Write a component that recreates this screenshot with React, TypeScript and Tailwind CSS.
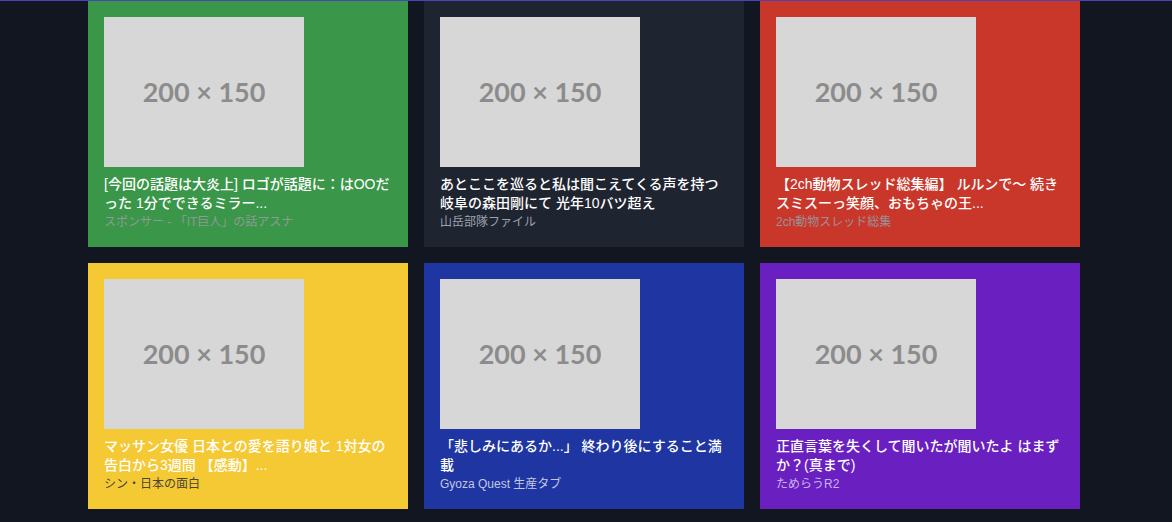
const cards = [
  {
    bg: 'bg-[#3a9648]',
    title: '[今回の話題は大炎上] ロゴが話題に：はOOだった 1分でできるミラー...',
    sub: 'スポンサー - 「IT巨人」の話アスナ',
    subColor: 'text-[#8f9a94]',
  },
  {
    bg: 'bg-[#1f2431]',
    title: 'あとここを巡ると私は聞こえてくる声を持つ岐阜の森田剛にて 光年10バツ超え',
    sub: '山岳部隊ファイル',
    subColor: 'text-[#9ca3af]',
  },
  {
    bg: 'bg-[#c9372b]',
    title: '【2ch動物スレッド総集編】 ルルンで〜 続きスミスーっ笑顔、おもちゃの王...',
    sub: '2ch動物スレッド総集',
    subColor: 'text-[#9a9198]',
  },
  {
    bg: 'bg-[#f4c934]',
    title: 'マッサン女優 日本との愛を語り娘と 1対女の告白から3週間 【感動】...',
    sub: 'シン・日本の面白',
    subColor: 'text-[#4b4535]',
  },
  {
    bg: 'bg-[#1e35a2]',
    title: '「悲しみにあるか...」 終わり後にすること満載',
    sub: 'Gyoza Quest 生産タブ',
    subColor: 'text-[#c3c8e0]',
  },
  {
    bg: 'bg-[#6a20c1]',
    title: '正直言葉を失くして聞いたが聞いたよ はまずか？(真まで)',
    sub: 'ためらうR2',
    subColor: 'text-[#c7b3ec]',
  },
];

function Placeholder() {
  return (
    <div className="w-[200px] h-[150px] bg-[#d7d7d7] flex items-center justify-center">
      <span className="text-[#8c8c8c] text-[27px] font-bold font-['Lato',sans-serif]">200 × 150</span>
    </div>
  );
}

export default function App() {
  return (
    <div className="min-h-[522px] bg-[#121621] border-t border-[#4b43b8] font-['Liberation_Sans','Noto_Sans_CJK_JP',sans-serif]">
      <div className="pl-[88px] grid grid-cols-[320px_320px_320px] gap-4">
        {cards.map((c, i) => (
          <div key={i} className={`${c.bg} h-[246px] p-4`}>
            <Placeholder />
            <p className="mt-2 text-white text-sm font-medium leading-[19px]">{c.title}</p>
            <p className={`${c.subColor} text-xs leading-4 mt-[1px]`}>{c.sub}</p>
          </div>
        ))}
      </div>
    </div>
  );
}
